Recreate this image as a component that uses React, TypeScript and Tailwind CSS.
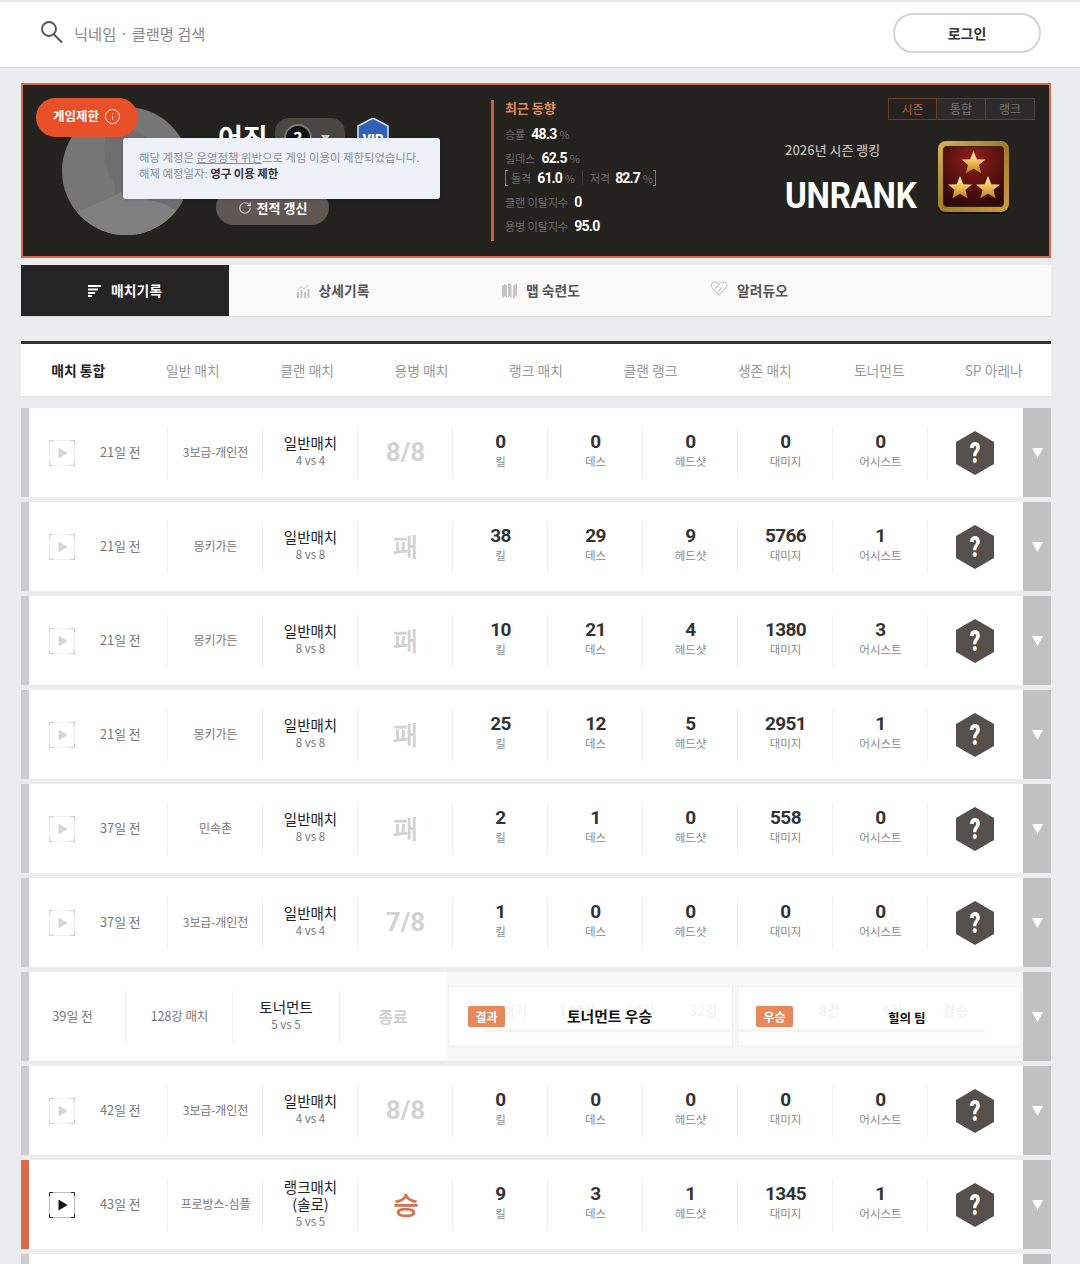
import React from 'react';
import { RotateCw, Info } from 'lucide-react';

interface Match {
    ago: string;
    map: string;
    mode: string[];
    vs: string;
    result: string;
    kill: string;
    death: string;
    head: string;
    damage: string;
    assist: string;
    won?: boolean;
}

const MATCHES_TOP: Match[] = [
    { ago: '21일 전', map: '3보급-개인전', mode: ['일반매치'], vs: '4 vs 4', result: '8/8', kill: '0', death: '0', head: '0', damage: '0', assist: '0' },
    { ago: '21일 전', map: '몽키가든', mode: ['일반매치'], vs: '8 vs 8', result: '패', kill: '38', death: '29', head: '9', damage: '5766', assist: '1' },
    { ago: '21일 전', map: '몽키가든', mode: ['일반매치'], vs: '8 vs 8', result: '패', kill: '10', death: '21', head: '4', damage: '1380', assist: '3' },
    { ago: '21일 전', map: '몽키가든', mode: ['일반매치'], vs: '8 vs 8', result: '패', kill: '25', death: '12', head: '5', damage: '2951', assist: '1' },
    { ago: '37일 전', map: '민속촌', mode: ['일반매치'], vs: '8 vs 8', result: '패', kill: '2', death: '1', head: '0', damage: '558', assist: '0' },
    { ago: '37일 전', map: '3보급-개인전', mode: ['일반매치'], vs: '4 vs 4', result: '7/8', kill: '1', death: '0', head: '0', damage: '0', assist: '0' },
];

const MATCHES_BOTTOM: Match[] = [
    { ago: '42일 전', map: '3보급-개인전', mode: ['일반매치'], vs: '4 vs 4', result: '8/8', kill: '0', death: '0', head: '0', damage: '0', assist: '0' },
    { ago: '43일 전', map: '프로방스-심플', mode: ['랭크매치', '(솔로)'], vs: '5 vs 5', result: '승', kill: '9', death: '3', head: '1', damage: '1345', assist: '1', won: true },
];

const SUB_TABS = ['매치 통합', '일반 매치', '클랜 매치', '용병 매치', '랭크 매치', '클랜 랭크', '생존 매치', '토너먼트', 'SP 아레나'];
const BRACKET = ['대기', '128강', '64강', '32강', '16강', '8강', '4강', '결승'];

const NUM = "font-['Roboto',sans-serif]";

const Cell: React.FC<{ children?: React.ReactNode; last?: boolean; className?: string }> = ({ children, last, className }) => (
    <div className={`flex h-[52px] w-[95px] shrink-0 flex-col items-center justify-center pl-[1px] ${last ? '' : 'border-r border-[#efefef]'} ${className ?? ''}`}>
        {children}
    </div>
);

const Stat: React.FC<{ value: string; label: string }> = ({ value, label }) => (
    <Cell className="pb-[8px]">
        <span className={`${NUM} text-[19px] leading-[25px] font-bold tracking-[-0.6px] text-[#333]`}>{value}</span>
        <span className="text-[11.5px] leading-[15px] text-[#8a8a8a]">{label}</span>
    </Cell>
);

const PlayBox: React.FC<{ active?: boolean }> = ({ active }) => {
    const corner = active ? '#222' : '#c9c9c9';
    return (
        <svg width="26" height="26" viewBox="0 0 26 26" className="shrink-0">
            <rect x="0.5" y="0.5" width="25" height="25" fill="none" stroke={active ? '#bbb' : '#efefef'} />
            <path d="M0.5 4V0.5H4M22 0.5H25.5V4M25.5 22V25.5H22M4 25.5H0.5V22" fill="none" stroke={corner} />
            <path d="M9.5 7.5L18.5 13L9.5 18.5Z" fill={active ? '#111' : '#d4d4d4'} />
        </svg>
    );
};

const Hexagon: React.FC = () => (
    <svg width="38" height="44" viewBox="0 0 38 44">
        <path d="M19 0L38 11V33L19 44L0 33V11Z" fill="#55504b" />
        <text transform="translate(19 31.5) scale(0.8 1.1)" textAnchor="middle" fontFamily="Roboto, sans-serif" fontWeight="900" fontSize="26" fill="#fff">?</text>
    </svg>
);

const ArrowCol: React.FC = () => (
    <div className="flex w-7 shrink-0 items-center justify-center bg-[#c1c1c1]">
        <svg width="11" height="10" viewBox="0 0 11 10"><path d="M0 0H11L5.5 10Z" fill="#fff" /></svg>
    </div>
);

const MatchRow: React.FC<{ match: Match }> = ({ match }) => (
    <div className="flex h-[89px] shrink-0">
        <div className={`w-2 shrink-0 ${match.won ? 'bg-[#d96b47]' : 'bg-[#cccccc]'}`} />
        <div className="flex flex-1 items-center bg-white">
            <div className="flex h-[52px] w-[139px] shrink-0 items-center border-r border-[#efefef] pl-5">
                <PlayBox active={match.won} />
                <span className="mb-[2px] ml-[25px] text-[12.8px] whitespace-nowrap text-[#777]">{match.ago}</span>
            </div>
            <Cell className="pb-[2px]"><span className="text-[12px] tracking-[-0.1px] whitespace-nowrap text-[#777]">{match.map}</span></Cell>
            <Cell className="pb-[3px]">
                {match.mode.map(line => (
                    <span key={line} className="text-[14.5px] leading-[17px] whitespace-nowrap text-[#222]">{line}</span>
                ))}
                <span className="mt-[2px] text-[11.5px] leading-[15px] text-[#777]">{match.vs}</span>
            </Cell>
            <Cell>
                <span className={`${NUM} text-[26px] font-bold ${match.won ? 'text-[#d5714f]' : 'text-[#d2d2d2]'}`}>{match.result}</span>
            </Cell>
            <Stat value={match.kill} label="킬" />
            <Stat value={match.death} label="데스" />
            <Stat value={match.head} label="헤드샷" />
            <Stat value={match.damage} label="대미지" />
            <Stat value={match.assist} label="어시스트" />
            <Cell last><div className="-ml-[3px]"><Hexagon /></div></Cell>
        </div>
        <ArrowCol />
    </div>
);

const TournamentRow: React.FC = () => (
    <div className="flex h-[89px] shrink-0">
        <div className="w-2 shrink-0 bg-[#cccccc]" />
        <div className="flex w-[417px] shrink-0 items-center bg-white">
            <div className="flex h-[52px] w-[97px] shrink-0 items-center justify-center border-r border-[#efefef] pr-[9px] pb-[2px]">
                <span className="text-[12.8px] whitespace-nowrap text-[#777]">39일 전</span>
            </div>
            <div className="flex h-[52px] w-[107px] shrink-0 items-center justify-center border-r border-[#efefef] pb-[1px] pl-[1px]">
                <span className="text-[12.5px] tracking-[-0.1px] whitespace-nowrap text-[#777]">128강 매치</span>
            </div>
            <div className="flex h-[52px] w-[107px] shrink-0 flex-col items-center justify-center border-r border-[#efefef] pb-[3px]">
                <span className="text-[14.5px] leading-[18px] text-[#222]">토너먼트</span>
                <span className="mt-[1px] text-[11.5px] leading-[15px] text-[#777]">5 vs 5</span>
            </div>
            <div className="flex h-[52px] w-[106px] shrink-0 items-center justify-center pb-[2px]">
                <span className="text-[16px] font-bold text-[#cfcfcf]">종료</span>
            </div>
        </div>
        <div className="relative flex flex-1 items-center gap-1 bg-[#f8f8f8] px-[2px]">
            <div className="flex h-[61px] w-[285px] shrink-0 items-center border border-[#eeeeee] bg-white pl-[19px]" />
            <div className="flex h-[61px] flex-1 items-center border border-[#eeeeee] bg-white" />
            {/* faint bracket labels sit under the result text */}
            <div className="absolute top-[28px] left-[37px] flex w-[504px] justify-between">
                {BRACKET.map(label => (
                    <span key={label} className="w-[63px] text-center text-[14px] font-bold whitespace-nowrap text-[#f3f3f3]">{label}</span>
                ))}
            </div>
            <div className="absolute top-[57px] left-[38px] h-[3px] w-[501px] bg-[#fdf1ea]" />
            <div className="absolute inset-x-0 top-[34px] flex h-[21px] items-center">
                <span className="ml-[22px] flex h-[21px] w-[37px] items-center justify-center rounded-[2px] bg-[#e8875a] text-[12px] font-bold text-white">결과</span>
                <span className="ml-[62px] text-[14.8px] font-bold whitespace-nowrap text-[#111]">토너먼트 우승</span>
                <span className="ml-[104px] flex h-[21px] w-[37px] items-center justify-center rounded-[2px] bg-[#e8875a] text-[12px] font-bold text-white">우승</span>
                <span className="mt-[3px] ml-[95px] text-[12.5px] font-bold whitespace-nowrap text-[#111]">힐의 팀</span>
            </div>
        </div>
        <ArrowCol />
    </div>
);

const TAB_ICONS: Record<string, React.ReactNode> = {
    match: (
        <svg width="14" height="12" viewBox="0 0 14 12" fill="#fff">
            <rect x="0" y="0" width="13" height="2" /><rect x="0" y="3.5" width="10" height="2" />
            <rect x="0" y="7" width="7" height="2" /><rect x="0" y="10" width="4" height="2" />
        </svg>
    ),
    stat: (
        <svg width="13" height="14" viewBox="0 0 13 14" fill="#c4c4c4">
            <rect x="0" y="8" width="2" height="6" /><rect x="3.5" y="6" width="2" height="8" />
            <rect x="7" y="8" width="2" height="6" /><rect x="10.5" y="5" width="2" height="9" />
            <path d="M0 6L4 2.5L7 5L12 0.5" fill="none" stroke="#c4c4c4" />
        </svg>
    ),
    map: (
        <svg width="15" height="16" viewBox="0 0 15 16" fill="#c4c4c4">
            <path d="M0 3L3 1L5 3V15L3 13L0 15Z" /><path d="M6 1L8 0L9.5 3V16L8 13L6 14Z" /><path d="M11 3L15 0V12L11 16Z" />
        </svg>
    ),
    duo: (
        <svg width="18" height="15" viewBox="0 0 18 16" fill="none" stroke="#c9c9c9" strokeWidth="1.3" className="-mt-[4px]">
            <path d="M9 15L1.5 7C-0.5 4 1.5 1 4.5 1C6.5 1 8 2 9 3.5C10 2 11.5 1 13.5 1C16.5 1 18.5 4 16.5 7Z" />
            <path d="M5 8L9 4.5M8 11L12 7" />
        </svg>
    ),
};

const Tab: React.FC<{ icon: string; label: string; active?: boolean }> = ({ icon, label, active }) => (
    <div className={`flex h-full w-[208px] items-center justify-center gap-[9px] ${active ? 'bg-[#242424] text-white' : 'text-[#555]'}`}>
        {TAB_ICONS[icon]}
        <span className="text-[13.8px] font-bold whitespace-nowrap">{label}</span>
    </div>
);

const Avatar: React.FC = () => (
    <svg width="128" height="128" viewBox="0 0 128 128" className="shrink-0">
        <defs>
            <clipPath id="avatarClip"><circle cx="64" cy="64" r="64" /></clipPath>
        </defs>
        <circle cx="64" cy="64" r="64" fill="#767676" />
        <g clipPath="url(#avatarClip)">
            <path d="M44 28C54 20 72 20 84 30C92 40 94 58 88 72L118 84L128 128H0L16 104L54 88L52 74C44 66 40 50 44 28Z" fill="#6e6e6e" />
            <path d="M15 105L58 86L100 96L128 110V128H0V115Z" fill="#808080" />
        </g>
    </svg>
);

const RankEmblem: React.FC = () => {
    const star = 'M0 -12L3.4 -3.8L12 -3.4L5.4 2L7.7 10.3L0 5.7L-7.7 10.3L-5.4 2L-12 -3.4L-3.4 -3.8Z';
    return (
        <svg width="74" height="75" viewBox="0 0 74 75">
            <defs>
                <linearGradient id="rankGold" x1="0" y1="0" x2="1" y2="1">
                    <stop offset="0" stopColor="#d9b25c" />
                    <stop offset="0.5" stopColor="#a37a2b" />
                    <stop offset="1" stopColor="#c99c43" />
                </linearGradient>
                <radialGradient id="rankRed" cx="0.5" cy="0.2" r="0.85">
                    <stop offset="0" stopColor="#8f1f1c" />
                    <stop offset="1" stopColor="#2a0605" />
                </radialGradient>
                <linearGradient id="rankStar" x1="0" y1="0" x2="0" y2="1">
                    <stop offset="0" stopColor="#fff3c4" />
                    <stop offset="0.55" stopColor="#edb94f" />
                    <stop offset="1" stopColor="#b97a24" />
                </linearGradient>
            </defs>
            <rect x="1" y="3" width="71" height="71" rx="8" fill="#14100b" />
            <rect x="1" y="1" width="71" height="71" rx="8" fill="url(#rankGold)" />
            <rect x="6.5" y="6.5" width="60" height="60" rx="3" fill="url(#rankRed)" stroke="#3a2206" />
            <g fill="url(#rankStar)">
                <path d={star} transform="translate(36.5 23)" />
                <path d={star} transform="translate(23 48)" />
                <path d={star} transform="translate(51 48)" />
            </g>
        </svg>
    );
};

const Profile: React.FC = () => (
    <div className="relative flex h-[175px] border-2 border-[#d9684a] bg-[#24221f] text-white">
        <div className="relative w-[468px] shrink-0 pt-[22px] pl-[39px]">
            <Avatar />
            <div className="absolute top-[33px] left-[195px] flex items-center">
                <span className="-mt-[2px] text-[27px] leading-[36px] font-bold">어진</span>
                <div className="ml-[7px] flex h-[40px] w-[70px] items-center gap-[9px] rounded-[14px] bg-[#4a4641] pl-[9px]">
                    <span className="flex h-[28px] w-[28px] items-center justify-center rounded-full border-2 border-[#777] bg-[#111] text-[18px] font-bold">?</span>
                    <svg width="9" height="6" viewBox="0 0 9 6"><path d="M0 0H9L4.5 6Z" fill="#ccc" /></svg>
                </div>
                <svg width="32" height="40" viewBox="0 0 32 40" className="ml-[12px]">
                    <path d="M16 0L31 8V32L16 40L1 32V8Z" fill="#2f62b5" stroke="#dbe6f5" strokeWidth="1.5" />
                    <text x="16" y="25" textAnchor="middle" fontFamily="Roboto, sans-serif" fontWeight="900" fontSize="13" fill="#fff">VIP</text>
                </svg>
            </div>
            <div className="absolute top-[105px] left-[193px] flex h-[35px] w-[113px] items-center justify-center gap-[5px] rounded-full bg-[#5e5752]">
                <RotateCw size={14} className="text-[#d0d0d0]" />
                <span className="mt-[1px] text-[13px] font-bold">전적 갱신</span>
            </div>
        </div>

        <div className="mt-[15px] h-[141px] w-[3px] shrink-0 bg-[#c85f3c]" />
        <div className="w-[280px] shrink-0 pt-[13px] pl-[11px] text-[11px] text-[#6a6a6a]">
            <p className="text-[13px] leading-[20px] font-bold text-[#e08a5a]">최근 동향</p>
            <p className="mt-[6px] flex h-[20px] items-center gap-[6px]">승률 <b className={`${NUM} text-[14px] tracking-[-0.7px] text-white`}>48.3</b><span className="-ml-[3px]">%</span></p>
            <p className="mt-[4px] flex h-[20px] items-center gap-[6px]">킬데스 <b className={`${NUM} text-[14px] tracking-[-0.7px] text-white`}>62.5</b><span className="-ml-[3px]">%</span></p>
            <p className="flex h-[20px] items-center gap-[5px]">
                <span className="h-[16px] w-[3px] border-y border-l border-[#777]" />
                <span className="-ml-[2px]">돌격</span> <b className={`${NUM} ml-[1px] text-[14px] tracking-[-0.9px] text-white`}>61.0</b><span className="-ml-[2px]">%</span>
                <span className="mx-[2px] h-[14px] w-px bg-[#3c3c3c]" />
                저격 <b className={`${NUM} text-[14px] tracking-[-0.9px] text-white`}>82.7</b><span className="-ml-[2px]">%</span>
                <span className="-ml-[5px] h-[16px] w-[3px] border-y border-r border-[#777]" />
            </p>
            <p className="mt-[4px] flex h-[20px] items-center gap-[6px]">클랜 이탈지수 <b className={`${NUM} text-[14px] text-white`}>0</b></p>
            <p className="mt-[4px] flex h-[20px] items-center gap-[6px]">용병 이탈지수 <b className={`${NUM} text-[14px] tracking-[-0.7px] text-white`}>95.0</b></p>
        </div>

        <div className="flex-1 pt-[13px] pr-[14px] pl-[11px]">
            <div className="flex justify-end">
                <span className="flex h-[22px] w-[49px] items-center justify-center border border-[#6b3a28] text-[12px] text-[#c05a35]">시즌</span>
                <span className="flex h-[22px] w-[49px] items-center justify-center border-y border-r border-[#474747] bg-[#2c2b29] text-[12px] text-[#777]">통합</span>
                <span className="flex h-[22px] w-[49px] items-center justify-center border-y border-r border-[#474747] bg-[#2c2b29] text-[12px] text-[#777]">랭크</span>
            </div>
            <div className="mt-[20px] flex items-start">
                <div className="w-[152px] shrink-0">
                    <p className="text-[13px] leading-[20px] font-medium text-[#b9b9b9]">2026년 시즌 랭킹</p>
                    <p className={`${NUM} mt-[14px] origin-left scale-x-[0.92] text-[36px] leading-[44px] font-bold tracking-[-0.3px] text-white`}>UNRANK</p>
                </div>
                <RankEmblem />
            </div>
        </div>

        <div className="absolute top-[13px] left-[13px] flex h-[39px] w-[102px] items-center justify-center gap-[5px] rounded-full bg-[#e8502a] pb-[2px]">
            <span className="text-[12.5px] font-bold">게임제한</span>
            <Info size={17} strokeWidth={1.4} className="text-[#fbe0d8]" />
        </div>
        <div className="absolute top-[53px] left-[100px] h-[61px] w-[317px] rounded-[3px] bg-[#eef2f8] px-[16px] pt-[11px] text-[11.4px] leading-[16px] whitespace-nowrap text-[#8a8f96] shadow-sm">
            <p>해당 계정은 <span className="underline">운영정책 위반</span>으로 게임 이용이 제한되었습니다.</p>
            <p>해제 예정일자: <b className="text-[#333]">영구 이용 제한</b></p>
        </div>
    </div>
);

export default function App() {
    return (
        <div className="h-[1264px] overflow-hidden bg-[#ebecee] font-['Noto_Sans_CJK_KR','Noto_Sans',sans-serif]">
            <div className="h-[2px] bg-[#e3e6ea]" />
            <header className="flex h-[65px] items-center justify-between bg-white px-[39px] pb-[3px] shadow-[0_1px_1px_rgba(0,0,0,0.08)]">
                <div className="flex items-center gap-[11px]">
                    <svg width="24" height="24" viewBox="0 0 24 24" fill="none" stroke="#555" strokeWidth="1.9" className="-mt-[3px]">
                        <circle cx="10" cy="9" r="7" />
                        <path d="M15 14.5L23 22.5" />
                    </svg>
                    <span className="text-[15.3px] text-[#888]">닉네임 · 클랜명 검색</span>
                </div>
                <div className="flex h-[40px] w-[148px] items-center justify-center rounded-full border-2 border-[#d4d4d4] text-[14px] font-bold text-[#333]">로그인</div>
            </header>

            <main className="flex flex-col pt-[16px] pr-[29px] pl-[21px]">
                <Profile />

                <nav className="mt-[7px] flex h-[52px] border-b border-[#dcdcdc] bg-[#fafafa]">
                    <Tab icon="match" label="매치기록" active />
                    <Tab icon="stat" label="상세기록" />
                    <Tab icon="map" label="맵 숙련도" />
                    <Tab icon="duo" label="알려듀오" />
                </nav>

                <div className="mt-[24px] flex h-[56px] border-t-[3px] border-b border-t-[#333] border-b-[#e0e0e0] bg-white">
                    {SUB_TABS.map((tab, i) => (
                        <div key={tab} className={`flex flex-1 items-center justify-center text-[13.8px] whitespace-nowrap ${i === 0 ? 'font-bold text-[#222]' : 'text-[#999]'}`}>
                            {tab}
                        </div>
                    ))}
                </div>

                <div className="mt-[11px] flex flex-col gap-[5px]">
                    {MATCHES_TOP.map((m, i) => <MatchRow key={i} match={m} />)}
                    <TournamentRow />
                    {MATCHES_BOTTOM.map((m, i) => <MatchRow key={i} match={m} />)}
                    {/* next row is cut off by the window, only its top edge shows */}
                    <div className="flex h-[89px] shrink-0">
                        <div className="w-2 shrink-0 bg-[#cccccc]" />
                        <div className="flex-1 bg-white" />
                        <div className="w-7 shrink-0 bg-[#c1c1c1]" />
                    </div>
                </div>
            </main>
        </div>
    );
}
